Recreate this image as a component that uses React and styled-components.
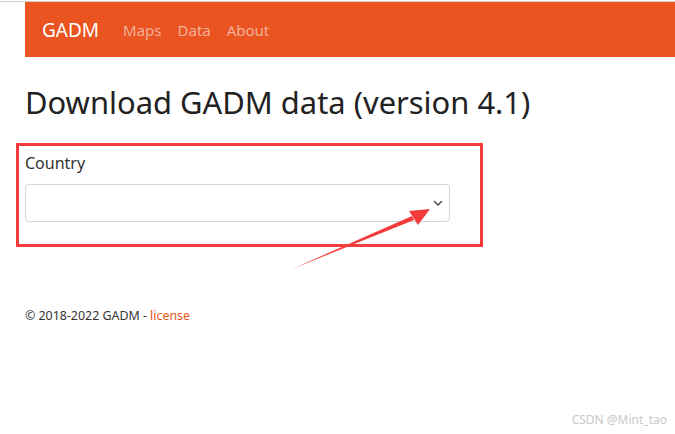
import React from 'react';
import styled, { createGlobalStyle } from 'styled-components';

const GlobalStyle = createGlobalStyle`
  body {
    margin: 0;
    background: #fff;
    font-family: "Noto Sans", "Open Sans", sans-serif;
    color: #333;
  }
`;

const Page = styled.div`
  position: relative;
  width: 675px;
  height: 434px;
  overflow: hidden;
  padding-top: 1px;
  box-sizing: border-box;
`;

const TopRule = styled.div`
  height: 1px;
  background: #d0d0d0;
`;

const Navbar = styled.nav`
  display: flex;
  align-items: center;
  margin-left: 25px;
  height: 55px;
  padding-left: 17px;
  background: #e95420;
`;

const Brand = styled.span`
  font-size: 19px;
  color: #fff;
  margin-right: 24px;
`;

const NavLink = styled.span`
  font-size: 15px;
  color: rgba(255, 255, 255, 0.55);
  margin-right: 16px;
`;

const Main = styled.main`
  padding: 0 25px;
`;

const Title = styled.h1`
  margin: 27px 0 0;
  font-size: 30.9px;
  font-weight: 400;
  line-height: 1.2;
  color: #222;
`;

const Field = styled.div`
  margin-top: 30px;
  width: 425px;
`;

const Label = styled.label`
  display: block;
  font-size: 16px;
  line-height: 24px;
  color: #333;
  margin-bottom: 9px;
`;

const Select = styled.div`
  position: relative;
  height: 38px;
  box-sizing: border-box;
  border: 1px solid #ced4da;
  border-radius: 4px;
  background: #fff;
`;

const Chevron = styled.svg`
  position: absolute;
  right: 6px;
  top: 14px;
`;

const Footer = styled.footer`
  margin-top: 85px;
  font-size: 12.4px;
  color: #333;
`;

const FooterLink = styled.span`
  color: #e95420;
`;

const Annotation = styled.div`
  position: absolute;
  left: 16px;
  top: 143px;
  width: 467px;
  height: 104px;
  box-sizing: border-box;
  border: 3px solid #f43b3b;
`;

const Arrow = styled.svg`
  position: absolute;
  left: 0;
  top: 0;
`;

const Watermark = styled.div`
  position: absolute;
  right: 8px;
  bottom: 6px;
  font-size: 12px;
  color: #c8c8c8;
`;

export default function App() {
  return (
    <Page>
      <GlobalStyle />
      <TopRule />
      <Navbar>
        <Brand>GADM</Brand>
        <NavLink>Maps</NavLink>
        <NavLink>Data</NavLink>
        <NavLink>About</NavLink>
      </Navbar>
      <Main>
        <Title>Download GADM data (version 4.1)</Title>
        <Field>
          <Label>Country</Label>
          <Select>
            <Chevron width="10" height="8" viewBox="0 0 10 8">
              <path d="M1.5 2.5 L5 6 L8.5 2.5" fill="none" stroke="#444" strokeWidth="1.4" strokeLinecap="round" strokeLinejoin="round" />
            </Chevron>
          </Select>
        </Field>
        <Footer>
          © 2018-2022 GADM - <FooterLink>license</FooterLink>
        </Footer>
      </Main>
      <Annotation />
      <Arrow width="675" height="434" viewBox="0 0 675 434">
        <polygon points="292,269 412,216 414,220" fill="#f43b3b" />
        <polygon points="430,209 409,211 418,225" fill="#f43b3b" />
      </Arrow>
      <Watermark>CSDN @Mint_tao</Watermark>
    </Page>
  );
}
